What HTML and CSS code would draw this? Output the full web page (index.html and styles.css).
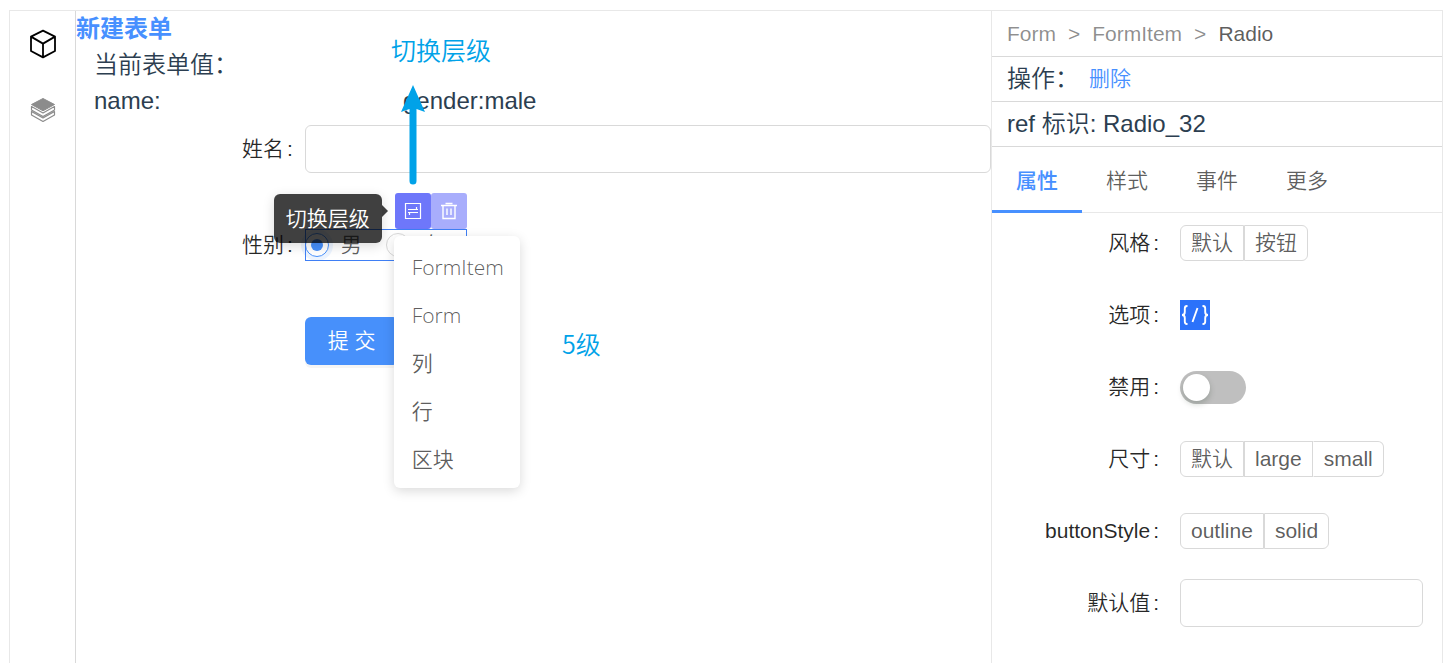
FILE: index.html
```html
<!DOCTYPE html>
<html lang="zh-CN">
<head>
<meta charset="utf-8">
<title>新建表单</title>
<link rel="stylesheet" href="styles.css">
</head>
<body>
<div class="designer">
  <nav class="rail">
    <button class="rail-button" type="button" aria-label="组件">
      <svg width="28" height="30" viewBox="0 0 28 30" fill="none" stroke="#000" stroke-width="1.8" stroke-linejoin="round"><path d="M14 1.6 26 7.6V22L14 28.4 2 22V7.6ZM2 7.6 14 14.6 26 7.6M14 14.6V28.4"/></svg>
    </button>
    <button class="rail-button" type="button" aria-label="图层">
      <svg width="26" height="26" viewBox="0 0 26 26" fill="#8c8c8c" stroke="#8c8c8c" stroke-linejoin="round"><path d="M13 1.500 24.500 7.500 13 13.800 1.500 7.500Z"/><path fill="none" stroke-width="1.200" d="M1.500 9.500v3.500L13 19.500 24.500 13V9.500L13 16ZM1.500 14.500V18L13 24.500 24.500 18v-3.500L13 21Z"/></svg>
    </button>
  </nav>

  <main class="canvas">
    <h1 class="title">新建表单</h1>
    <section class="values">
      <div>当前表单值：</div>
      <div class="values-row"><span>name:</span><span>gender:male</span></div>
    </section>

    <form class="form">
      <label class="form-label" for="name">姓名</label>
      <input class="text-box" id="name" type="text">

      <span class="form-label" id="gender-label">性别</span>
      <div class="selected" role="radiogroup" aria-labelledby="gender-label">
        <label class="choice"><input type="radio" name="gender" checked>男</label>
        <label class="choice"><input type="radio" name="gender">女</label>
        <div class="tools">
          <div class="tip" role="tooltip">切换层级</div>
          <button class="tool" type="button" aria-label="切换层级">
            <svg width="18" height="18" viewBox="0 0 18 18" fill="none" stroke="#fff" stroke-width="1.200"><path d="M1.500 1.500h15v15h-15ZM4 7.500h10M12.500 5v2.500M14 10.500H4M5.500 10.500V13"/></svg>
          </button>
          <button class="tool tool-faded" type="button" aria-label="删除">
            <svg width="18" height="18" viewBox="0 0 18 18" fill="none" stroke="#fff" stroke-width="1.400"><path d="M1 3.500h16M5.500 1.500h7M3 3.500v13h12v-13M7 6.500v6.500M11 6.500v6.500"/></svg>
          </button>
          <ul class="menu">
            <li><button type="button">FormItem</button></li>
            <li><button type="button">Form</button></li>
            <li><button type="button">列</button></li>
            <li><button type="button">行</button></li>
            <li><button type="button">区块</button></li>
          </ul>
        </div>
      </div>

      <button class="submit" type="button">提 交</button>
    </form>

    <div class="note note-switch">切换层级</div>
    <svg class="note-arrow" width="24" height="100" viewBox="0 0 24 100" fill="#00a2e8"><path d="M12 0 24 27 15.500 24V96a3.500 3.500 0 0 1-7 0V24L0 27Z"/></svg>
    <div class="note note-levels">5级</div>
  </main>

  <aside class="panel">
    <nav class="crumbs">
      <a href="#form">Form</a><span>&gt;</span><a href="#item">FormItem</a><span>&gt;</span><a class="current" href="#radio">Radio</a>
    </nav>
    <div class="panel-row">操作：<button class="link" type="button">删除</button></div>
    <div class="panel-row">ref 标识: Radio_32</div>
    <div class="tabs" role="tablist">
      <button class="tab active" type="button" role="tab" aria-selected="true">属性</button>
      <button class="tab" type="button" role="tab">样式</button>
      <button class="tab" type="button" role="tab">事件</button>
      <button class="tab" type="button" role="tab">更多</button>
    </div>
    <form class="props">
      <span class="form-label" id="look">风格</span>
      <div class="segments" role="radiogroup" aria-labelledby="look">
        <label><input type="radio" name="look">默认</label>
        <label><input type="radio" name="look">按钮</label>
      </div>

      <label class="form-label" for="options">选项</label>
      <button class="code" id="options" type="button">
        <svg width="30" height="30" viewBox="0 0 30 30" fill="none" stroke="#fff" stroke-width="1.900"><path d="M7.500 6H7Q4.800 6 4.800 8.500v3.500q0 3-2.800 3 2.800 0 2.800 3v3.500q0 2.500 2.200 2.500h.500M22.500 6h.500q2.200 0 2.200 2.500v3.500q0 3 2.800 3-2.800 0-2.800 3v3.500q0 2.500-2.200 2.500h-.500M17.500 8 12.500 22"/></svg>
      </button>

      <label class="form-label" for="disabled">禁用</label>
      <input class="switch" id="disabled" type="checkbox" role="switch">

      <span class="form-label" id="size">尺寸</span>
      <div class="segments" role="radiogroup" aria-labelledby="size">
        <label><input type="radio" name="size">默认</label>
        <label><input type="radio" name="size">large</label>
        <label><input type="radio" name="size">small</label>
      </div>

      <span class="form-label" id="button-style">buttonStyle</span>
      <div class="segments" role="radiogroup" aria-labelledby="button-style">
        <label><input type="radio" name="button-style">outline</label>
        <label><input type="radio" name="button-style">solid</label>
      </div>

      <label class="form-label" for="default">默认值</label>
      <input class="text-box" id="default" type="text">
    </form>
  </aside>
</div>
</body>
</html>
```
FILE: styles.css
```css
* {
  box-sizing: border-box;
}

body {
  margin: 0;
  padding: 10px 12px 0 9px;
  background: #fff;
  color: #2c3e50;
  font: 350 24px/36px "Liberation Sans", "Noto Sans CJK SC", sans-serif;
}

button,
input {
  margin: 0;
  padding: 0;
  border: 0;
  background: none;
  color: inherit;
  font: inherit;
}

.designer {
  display: grid;
  grid-template-columns: 66px minmax(0, 1fr) 451px;
  min-height: calc(100vh - 10px);
  border: 1px solid #e8e8e8;
  border-bottom: 0;
}

.rail {
  display: flex;
  flex-direction: column;
  border-right: 1px solid #d9d9d9;
}

.rail-button {
  display: grid;
  place-items: center;
  height: 66px;
}

.canvas {
  position: relative;
}

.title {
  margin: 0;
  color: #4790ff;
  font-size: 24px;
  font-weight: 700;
}

.values {
  padding-left: 18px;
}

.values-row {
  display: grid;
  grid-template-columns: repeat(3, 1fr);
  gap: 30px;
}

.form {
  display: grid;
  grid-template-columns: 1fr 3fr;
  grid-auto-rows: 48px;
  row-gap: 48px;
  align-items: center;
  margin-top: 6px;
  font-size: 21px;
}

.form-label {
  color: rgba(0, 0, 0, 0.85);
  text-align: right;
}

.form-label::after {
  content: ":";
  margin: 0 12px 0 3px;
}

.text-box {
  width: 100%;
  height: 48px;
  padding: 0 16px;
  border: 1px solid #d9d9d9;
  border-radius: 6px;
}

.selected {
  position: relative;
  display: flex;
  justify-self: start;
  align-items: center;
  height: 32px;
  outline: 1px solid #3f7ff5;
  outline-offset: -1px;
}

.choice {
  display: flex;
  align-items: center;
  gap: 12px;
  padding-right: 24px;
  color: rgba(0, 0, 0, 0.65);
}

.choice input {
  display: grid;
  place-items: center;
  width: 24px;
  height: 24px;
  border: 1px solid #d9d9d9;
  border-radius: 50%;
  appearance: none;
}

.choice input:checked {
  border-color: #4790fb;
  box-shadow: 0 0 0 4px rgba(71, 144, 251, 0.1);
}

.choice input:checked::after {
  content: "";
  width: 12px;
  height: 12px;
  border-radius: 50%;
  background: #4790fb;
}

.tools {
  position: absolute;
  right: 0;
  bottom: 100%;
  z-index: 1;
  display: flex;
}

.tool {
  display: grid;
  place-items: center;
  width: 36px;
  height: 36px;
  border-radius: 3px;
  background: #6e77fa;
}

.tool-faded {
  background: #a8adfc;
}

.tip {
  position: absolute;
  top: 1px;
  right: 85px;
  padding: 7px 12px 6px;
  border-radius: 6px;
  background: rgba(0, 0, 0, 0.75);
  box-shadow: 0 3px 12px rgba(0, 0, 0, 0.15);
  color: #fff;
  white-space: nowrap;
}

.tip::after {
  content: "";
  position: absolute;
  top: 11px;
  left: 100%;
  border: 6px solid transparent;
  border-left-color: rgba(0, 0, 0, 0.75);
  border-right: 0;
}

.menu {
  position: absolute;
  top: 43px;
  left: -1px;
  width: 126px;
  margin: 0;
  padding: 6px 0;
  border-radius: 6px;
  background: #fff;
  box-shadow: 0 3px 12px rgba(0, 0, 0, 0.15);
  color: rgba(0, 0, 0, 0.65);
  font-family: "Open Sans", "Noto Sans CJK SC", sans-serif;
  font-size: 21px;
  list-style: none;
}

.menu button {
  width: 100%;
  height: 48px;
  padding: 1px 18px 0;
  text-align: left;
}

.submit {
  grid-column: 2;
  justify-self: start;
  height: 48px;
  padding: 0 23px;
  border-radius: 6px;
  background: #4790fb;
  box-shadow: 0 3px 0 rgba(0, 0, 0, 0.04);
  color: #fff;
}

.note,
.note-arrow {
  position: absolute;
  z-index: 2;
}

.note {
  color: #00a2e8;
  font-family: "Noto Sans CJK SC", sans-serif;
  font-size: 25px;
}

.note-switch {
  top: 20px;
  left: 315px;
}

.note-arrow {
  top: 74px;
  left: 325px;
}

.note-levels {
  top: 314px;
  left: 486px;
}

.panel {
  border-left: 1px solid #e8e8e8;
}

.crumbs,
.panel-row {
  display: flex;
  align-items: center;
  min-height: 45px;
  padding: 0 15px;
  border-bottom: 1px solid #d9d9d9;
}

.crumbs {
  gap: 12px;
  min-height: 46px;
  color: rgba(0, 0, 0, 0.45);
  font-size: 21px;
}

.crumbs a {
  color: inherit;
  text-decoration: none;
}

.crumbs .current {
  color: rgba(0, 0, 0, 0.65);
}

.link {
  padding: 0 10px;
  color: #4790ff;
  font-size: 21px;
}

.tabs {
  display: flex;
  border-bottom: 1px solid #e8e8e8;
}

.tab {
  height: 66px;
  margin-bottom: -1px;
  padding: 4px 24px 0;
  border-bottom: 3px solid transparent;
  color: rgba(0, 0, 0, 0.65);
  font-size: 21px;
}

.tab.active {
  border-color: #4790ff;
  color: #4790ff;
  font-weight: 500;
}

.props {
  display: grid;
  grid-template-columns: 188px 1fr;
  grid-auto-rows: 48px;
  row-gap: 24px;
  align-items: center;
  padding: 6px 19px 0 0;
  font-size: 21px;
}

.props .form-label::after {
  margin-right: 21px;
}

.segments {
  display: flex;
  color: rgba(0, 0, 0, 0.65);
}

.segments label {
  position: relative;
  height: 36px;
  padding: 0 10px;
  border: 1px solid #d9d9d9;
  line-height: 34px;
}

.segments label:first-child {
  border-radius: 6px 0 0 6px;
}

.segments label:last-child {
  border-radius: 0 6px 6px 0;
}

.segments label:nth-child(3) {
  border-left-color: transparent;
}

.segments input {
  position: absolute;
  inset: 0;
  opacity: 0;
}

.code {
  width: 30px;
  height: 30px;
  background: #2b72fa;
}

.code svg {
  display: block;
}

.switch {
  width: 66px;
  height: 33px;
  padding: 3px;
  border-radius: 17px;
  background: #bfbfbf;
  appearance: none;
}

.switch::before {
  content: "";
  display: block;
  width: 27px;
  height: 27px;
  border-radius: 50%;
  background: #fff;
  box-shadow: 0 3px 6px rgba(0, 35, 11, 0.2);
}
```
